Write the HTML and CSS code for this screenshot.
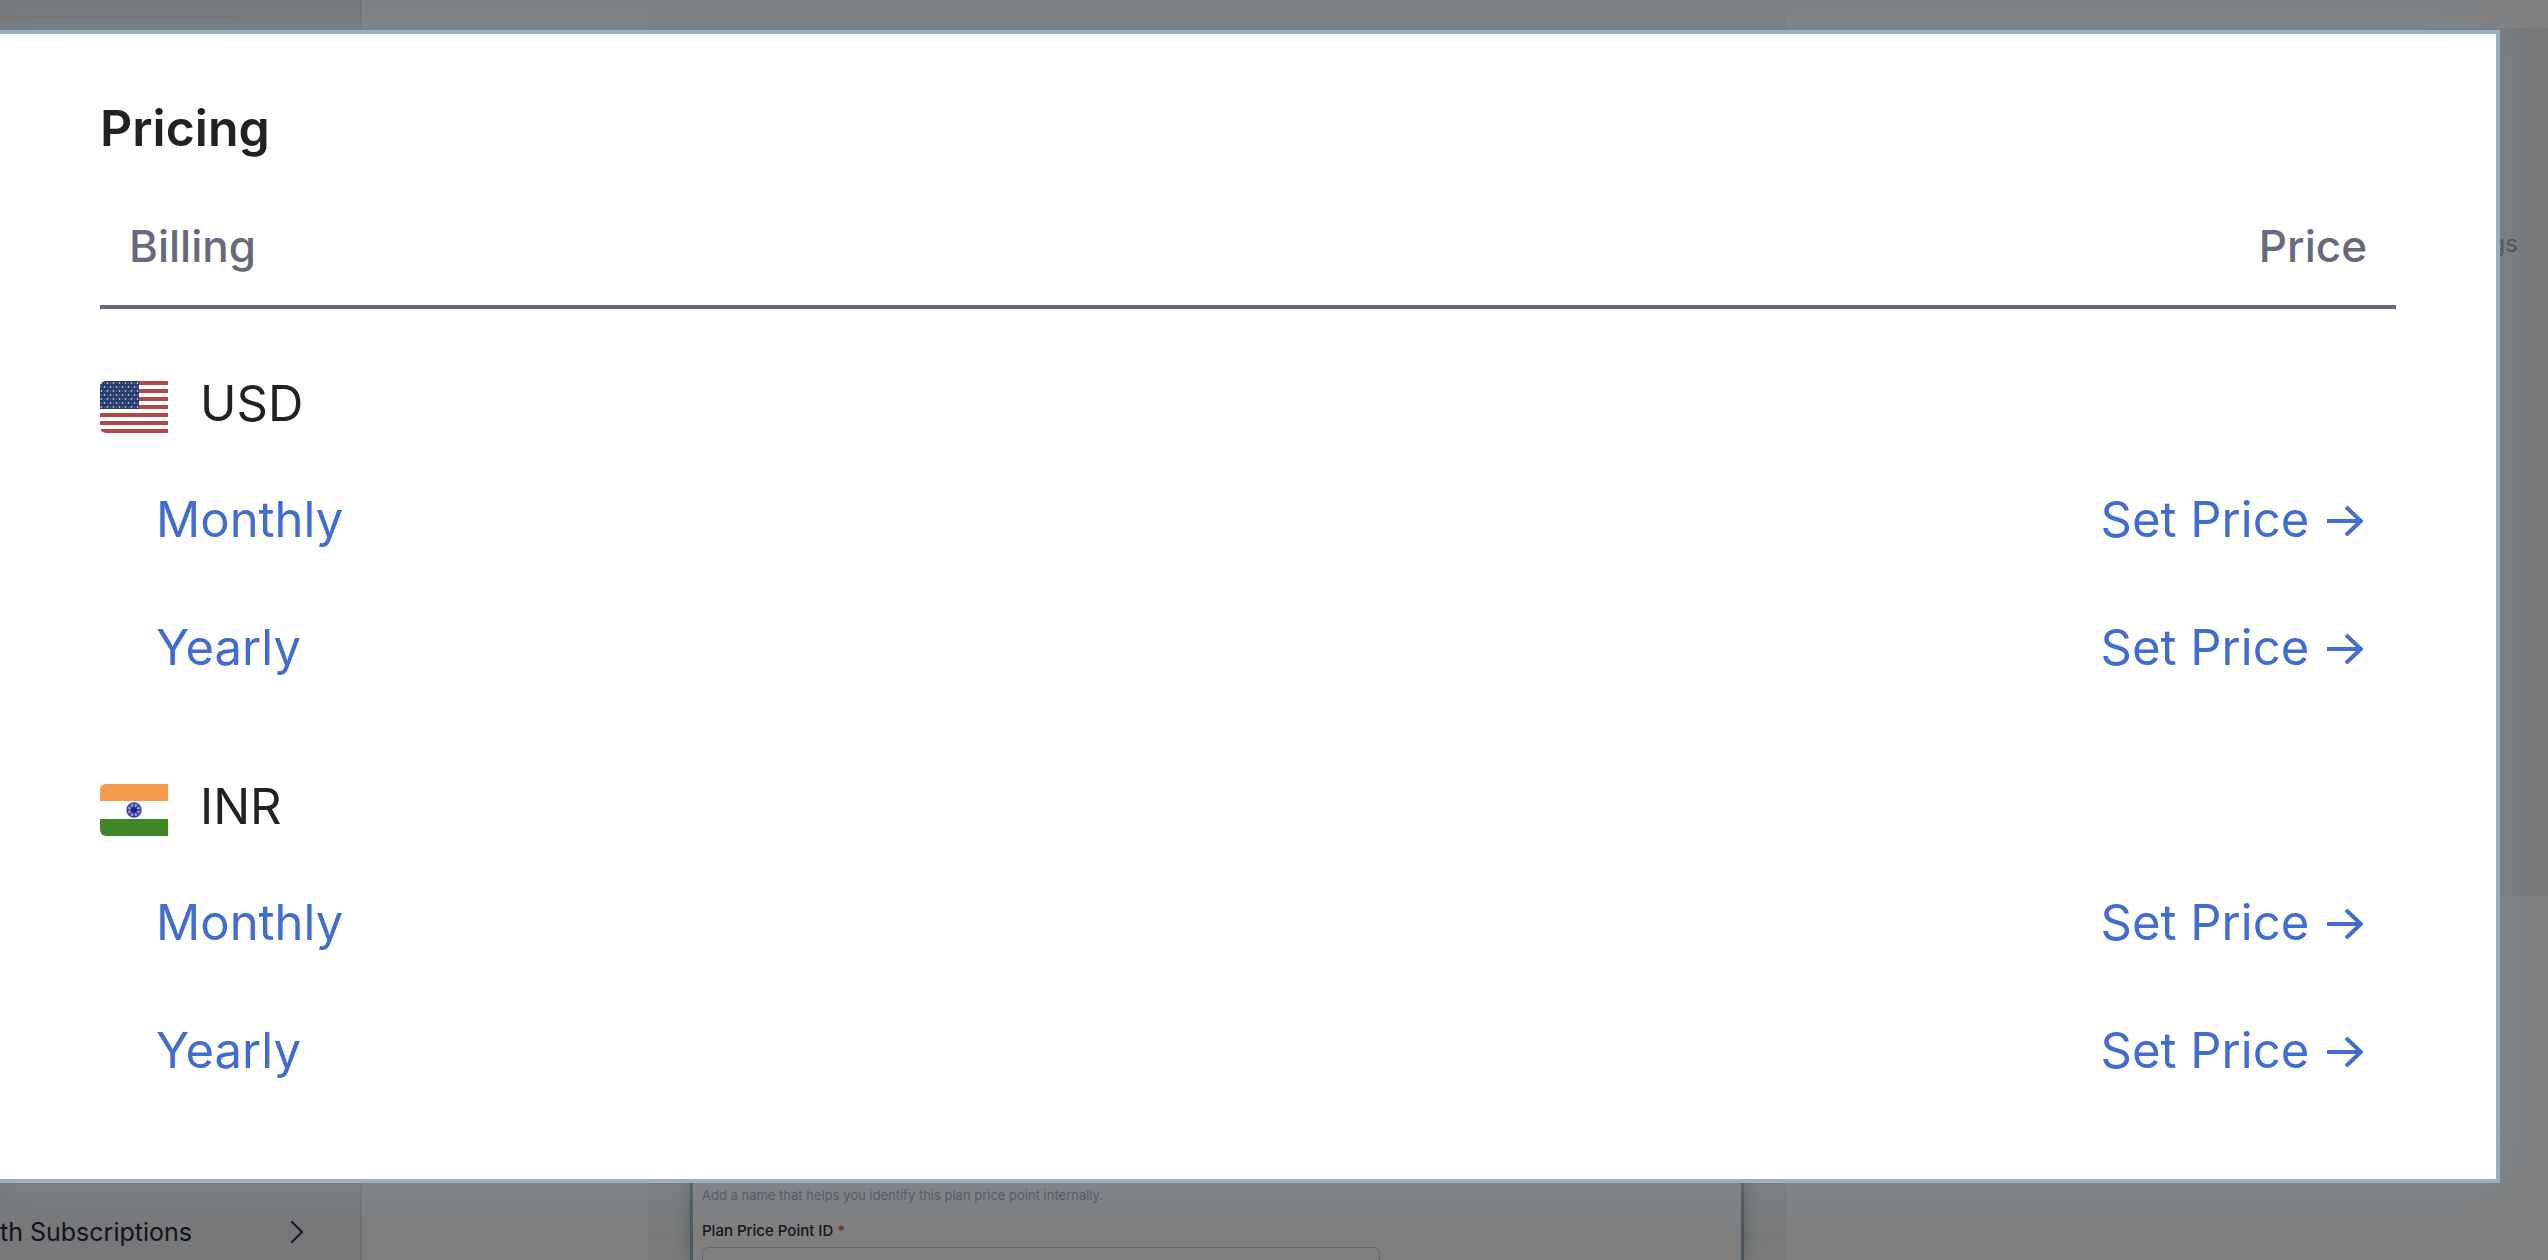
FILE: index.html
```html
<!DOCTYPE html>
<html lang="en">
<head>
    <meta charset="UTF-8">
    <title>Pricing</title>
    <link rel="stylesheet" href="styles.css">
</head>
<body>
    <!-- Page behind the dialog -->
    <div class="page">
        <nav class="sidebar">
            <div class="sidebar-top"></div>
            <a href="#" class="sidebar-link">
                <span>th Subscriptions</span>
                <svg class="chevron" viewBox="0 0 14 24"><path d="M1.500 1.500 L12 12 L1.500 22.500"/></svg>
            </a>
        </nav>
        <main class="main">
            <div class="form-area">
                <form class="form-card">
                    <p class="hint">Add a name that helps you identify this plan price point internally.</p>
                    <label for="price-id">Plan Price Point ID <span class="required">*</span></label>
                    <input type="text" id="price-id">
                </form>
            </div>
        </main>
        <aside class="side-panel">
            <a href="#">gs</a>
        </aside>
    </div>
    <div class="overlay"></div>

    <!-- Pricing dialog -->
    <section class="pricing-modal">
        <h2>Pricing</h2>
        <table class="pricing-table">
            <thead>
                <tr>
                    <th>Billing</th>
                    <th class="price">Price</th>
                </tr>
            </thead>
            <tbody>
                <tr class="currency">
                    <td colspan="2">
                        <div class="currency-name">
                            <svg class="flag" viewBox="0 0 68 52">
                                <defs>
                                    <pattern id="stars" width="6" height="8" patternUnits="userSpaceOnUse">
                                        <circle cx="1.500" cy="2" r="0.800" fill="#fff"/>
                                        <circle cx="4.500" cy="6" r="0.800" fill="#fff"/>
                                        <circle cx="4.500" cy="2" r="0.600" fill="#8c96b4"/>
                                        <circle cx="1.500" cy="6" r="0.600" fill="#8c96b4"/>
                                    </pattern>
                                </defs>
                                <rect width="68" height="52" fill="#fff"/>
                                <path d="M0 2H68M0 10H68M0 18H68M0 26H68M0 34H68M0 42H68M0 50H68" stroke="#b44848" stroke-width="4"/>
                                <rect width="39" height="28" fill="#273b6e"/>
                                <rect width="39" height="28" fill="url(#stars)"/>
                            </svg>
                            <span>USD</span>
                        </div>
                    </td>
                </tr>
                <tr>
                    <td><a href="#">Monthly</a></td>
                    <td class="price"><a href="#">Set Price <svg class="arrow" viewBox="0 0 38 32"><path d="M2 16H36M21 2L36 16L21 30"/></svg></a></td>
                </tr>
                <tr>
                    <td><a href="#">Yearly</a></td>
                    <td class="price"><a href="#">Set Price <svg class="arrow" viewBox="0 0 38 32"><path d="M2 16H36M21 2L36 16L21 30"/></svg></a></td>
                </tr>
            </tbody>
            <tbody>
                <tr class="currency">
                    <td colspan="2">
                        <div class="currency-name">
                            <svg class="flag" viewBox="0 0 68 52">
                                <rect width="68" height="52" fill="#fff"/>
                                <rect width="68" height="17" fill="#f39c4d"/>
                                <rect y="35" width="68" height="17" fill="#3f8726"/>
                                <circle cx="34" cy="26" r="7" fill="#9a9dd0" stroke="#4348a6" stroke-width="1.500"/>
                                <path d="M34 19V33M27 26H41M29 21L39 31M39 21L29 31" stroke="#343aa0" stroke-width="1.500"/>
                                <circle cx="34" cy="26" r="3" fill="#1b2294"/>
                            </svg>
                            <span>INR</span>
                        </div>
                    </td>
                </tr>
                <tr>
                    <td><a href="#">Monthly</a></td>
                    <td class="price"><a href="#">Set Price <svg class="arrow" viewBox="0 0 38 32"><path d="M2 16H36M21 2L36 16L21 30"/></svg></a></td>
                </tr>
                <tr>
                    <td><a href="#">Yearly</a></td>
                    <td class="price"><a href="#">Set Price <svg class="arrow" viewBox="0 0 38 32"><path d="M2 16H36M21 2L36 16L21 30"/></svg></a></td>
                </tr>
            </tbody>
        </table>
    </section>
</body>
</html>
```

FILE: styles.css
```css
* {
    margin: 0;
    padding: 0;
    box-sizing: border-box;
    font-family: Inter, "Liberation Sans", sans-serif;
}

body {
    position: relative;
    min-height: 100vh;
    background: #fff;
}

a {
    text-decoration: none;
}

/* Page behind the dialog */
.page {
    display: flex;
    height: 100vh;
    overflow: hidden;
}

.sidebar {
    display: flex;
    flex-direction: column;
    justify-content: space-between;
    width: 362px;
    padding-bottom: 8px;
    background: #eff0f3;
    border-right: 2px solid #e4e5e8;
}

.sidebar-top {
    width: 236px;
    height: 18px;
    border-bottom: 2px solid #e6e7ea;
}

.sidebar-link {
    display: flex;
    align-items: center;
    justify-content: space-between;
    padding-right: 56px;
    color: #262838;
    font-size: 25px;
    line-height: 40px;
}

.chevron {
    width: 14px;
    height: 24px;
    fill: none;
    stroke: #262838;
    stroke-width: 2;
}

.main {
    flex: 1;
    padding: 14px 0 0 286px;
}

.form-area {
    width: 1138px;
    height: 100%;
    padding: 60px 42px 0;
    background: #f5f5f5;
}

.form-card {
    display: flex;
    flex-direction: column;
    justify-content: flex-end;
    height: 100%;
    padding-left: 9px;
    background: #fff;
    border: 3px solid #9aafbe;
    border-width: 0 3px;
    box-shadow: 0 0 16px rgba(90, 130, 145, 0.5);
}

.hint {
    color: #9ca2bc;
    font-size: 13px;
    line-height: 20px;
    margin-bottom: 16px;
}

.form-card label {
    color: #2c2c3c;
    font-size: 15px;
    font-weight: 500;
    line-height: 20px;
    margin-bottom: 6px;
}

.required {
    color: #e8603c;
}

.form-card input {
    flex-shrink: 0;
    width: 678px;
    height: 44px;
    margin-bottom: -31px;
    border: 1px solid #ccc8d8;
    border-radius: 6px;
}

.side-panel {
    width: 120px;
    height: 868px;
    margin-top: 28px;
    padding: 200px 30px 0 0;
    background: #eff0f2;
    text-align: right;
}

.side-panel a {
    color: #8c9094;
    font-size: 24px;
    line-height: 32px;
}

.overlay {
    position: absolute;
    inset: 0;
    background: rgba(0, 0, 0, 0.5);
}

/* Pricing dialog */
.pricing-modal {
    position: absolute;
    top: 30px;
    left: 0;
    right: 48px;
    padding: 64px 100px 64px;
    background: #fff;
    border: 4px solid #9ab0be;
    border-left: 0;
    box-shadow: 0 0 48px rgba(130, 165, 190, 0.4);
}

.pricing-modal h2 {
    color: #222;
    font-size: 50px;
    font-weight: 600;
    line-height: 60px;
    margin-bottom: 56px;
}

.pricing-table {
    width: 100%;
    border-collapse: collapse;
}

.pricing-table th {
    padding: 0 29px 27px;
    border-bottom: 4px solid #69697d;
    color: #69697d;
    font-size: 44px;
    font-weight: 500;
    line-height: 64px;
    text-align: left;
}

.pricing-table td {
    padding: 34px 33px 34px 56px;
    color: #222;
    font-size: 49px;
    line-height: 60px;
}

.pricing-table .price {
    text-align: right;
}

.pricing-table .currency td {
    padding: 65px 0 22px;
}

.currency-name {
    display: flex;
    align-items: center;
    gap: 32px;
}

.flag {
    width: 68px;
    height: 52px;
    margin-top: 6px;
    border-radius: 6px 0 0 6px;
}

.pricing-table a {
    color: #416dd3;
}

.arrow {
    width: 38px;
    height: 32px;
    margin-left: 2px;
    fill: none;
    stroke: #416dd3;
    stroke-width: 4;
}
```
